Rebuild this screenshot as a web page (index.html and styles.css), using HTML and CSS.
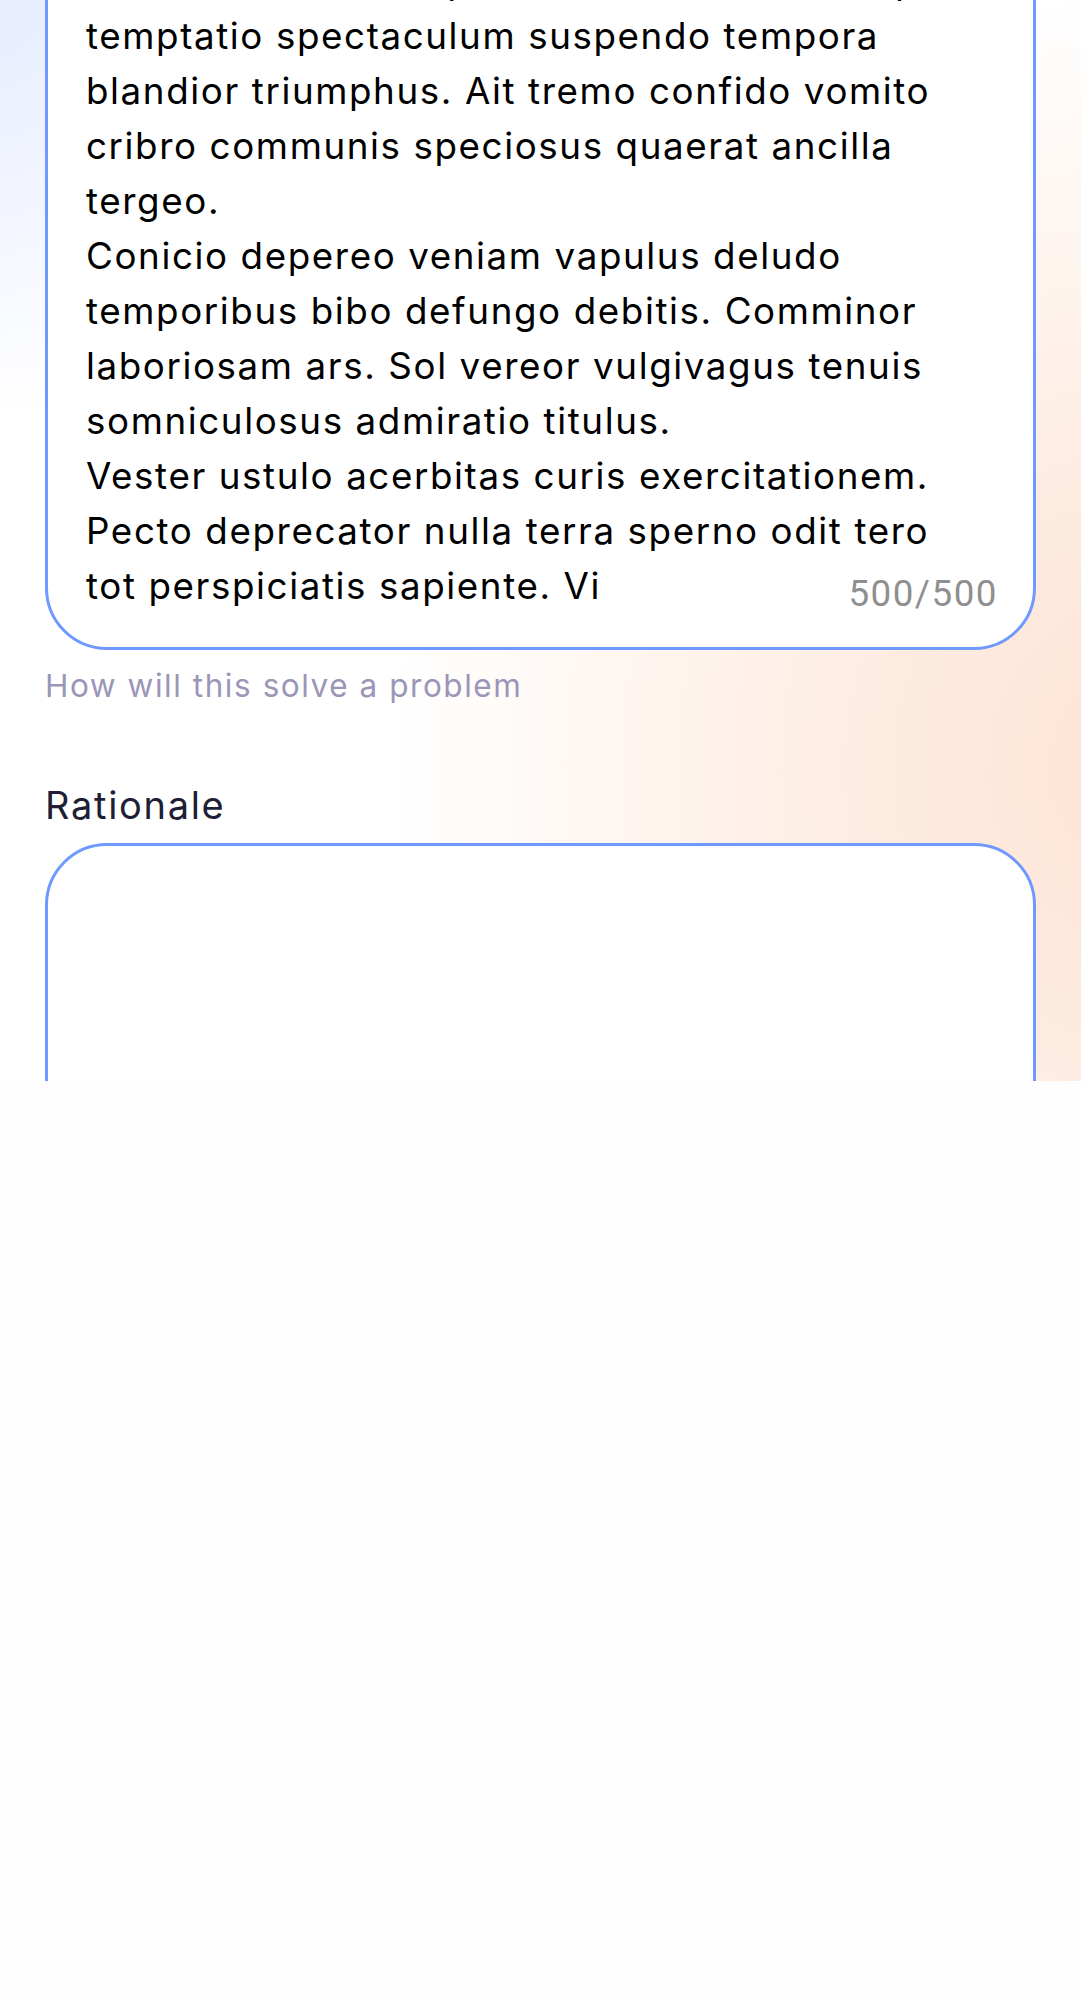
FILE: index.html
```html
<!DOCTYPE html>
<html lang="en">
<head>
<meta charset="utf-8">
<title>Idea form</title>
<link rel="stylesheet" href="styles.css">
</head>
<body>
<div class="screen">
  <div class="form">
    <div class="field field-first">
      <div class="input input-filled">
        <div class="input-text">
          <div class="line">Abutor velut curo apto tantum absorbeo sapiente</div>
          <div class="line">temptatio spectaculum suspendo tempora</div>
          <div class="line">blandior triumphus. Ait tremo confido vomito</div>
          <div class="line">cribro communis speciosus quaerat ancilla</div>
          <div class="line">tergeo.</div>
          <div class="line">Conicio depereo veniam vapulus deludo</div>
          <div class="line">temporibus bibo defungo debitis. Comminor</div>
          <div class="line">laboriosam ars. Sol vereor vulgivagus tenuis</div>
          <div class="line">somniculosus admiratio titulus.</div>
          <div class="line">Vester ustulo acerbitas curis exercitationem.</div>
          <div class="line">Pecto deprecator nulla terra sperno odit tero</div>
          <div class="line">tot perspiciatis sapiente. Vi</div>
        </div>
        <span class="counter">500/500</span>
      </div>
      <div class="helper">How will this solve a problem</div>
    </div>
    <div class="field field-second">
      <div class="label">Rationale</div>
      <div class="input input-empty"></div>
    </div>
  </div>
</div>
</body>
</html>
```

FILE: styles.css
```css
html, body {
  margin: 0;
  padding: 0;
  background: #fefefe;
}

.screen {
  height: 1081px;
  overflow: hidden;
  background:
    radial-gradient(ellipse 780px 780px at 1170px 770px, #fde3d3 0%, rgba(253, 230, 216, 0.78) 38%, rgba(255, 255, 255, 0) 100%),
    radial-gradient(ellipse 520px 480px at -60px -60px, #e2e9ff 0%, rgba(226, 233, 255, 0) 100%),
    #ffffff;
  font-family: "Inter", "Lato", "Noto Sans", sans-serif;
}

.form {
  display: flex;
  flex-direction: column;
  padding: 0 45px;
  margin-top: -89px;
}

.field {
  display: flex;
  flex-direction: column;
}

.input {
  position: relative;
  background: #ffffff;
  border: 3px solid #6f99ff;
  border-radius: 62px;
}

.input-filled {
  padding: 39px 38px 34px 38px;
}

.input-text {
  font-size: 36.75px;
  line-height: 55px;
  letter-spacing: 1.6px;
  color: #000000;
}

.line {
  white-space: nowrap;
}

.counter {
  position: absolute;
  right: 35px;
  bottom: 32px;
  font-family: "Roboto", "Liberation Sans", sans-serif;
  font-size: 36.75px;
  line-height: 42px;
  letter-spacing: 1.5px;
  color: #8f8f8f;
}

.helper {
  margin-top: 12px;
  font-size: 31.5px;
  line-height: 47px;
  letter-spacing: 1.55px;
  color: #9b95b8;
}

.field-second {
  margin-top: 68px;
}

.label {
  font-size: 38px;
  line-height: 56px;
  letter-spacing: 1.7px;
  color: #201e34;
  margin-bottom: 10px;
}

.input-empty {
  height: 600px;
}
```
